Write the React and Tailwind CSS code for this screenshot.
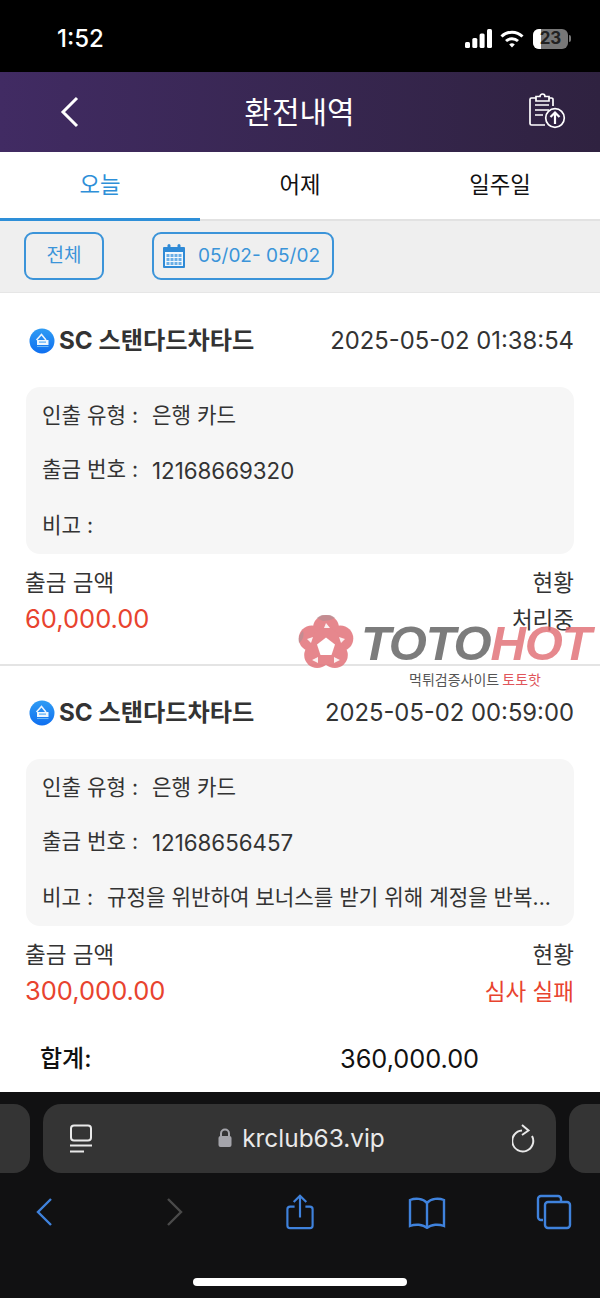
import React from 'react';

function BankIcon() {
  return (
    <svg width="26" height="26" viewBox="0 0 26 26" className="shrink-0">
      <defs>
        <linearGradient id="bank" x1="0" y1="0" x2="0" y2="1">
          <stop offset="0" stopColor="#2f9cf4" />
          <stop offset="1" stopColor="#0f6ff0" />
        </linearGradient>
      </defs>
      <circle cx="13" cy="13" r="12.5" fill="url(#bank)" />
      <path d="M7.5 12 12.5 6.5l4.5 5.5" fill="none" stroke="#eef6fe" strokeWidth="1.5" />
      <path d="M8 12h11.5v5H8z" fill="#eef6fe" />
      <path d="M10 13.5h7v1.2h-7z" fill="#5aaef5" />
      <path d="M8 18.5h11.5" stroke="#6db8f7" strokeWidth="1" />
    </svg>
  );
}

function Record({ time, account, note, amount, status, statusClass }) {
  return (
    <div className="px-[26px]">
      <div className="h-[94px] flex items-center justify-between pl-[3px] pt-[2px]">
        <div className="flex items-center gap-[4px]">
          <BankIcon />
          <span className="text-[24.2px] font-bold text-[#333]">SC 스탠다드차타드</span>
        </div>
        <span className="text-[23.8px] text-[#333]">{time}</span>
      </div>
      <div className="h-[167px] rounded-[14px] bg-[#f6f6f6] px-[16px] pt-[1.5px] flex flex-col text-[21.2px] text-[#333]">
        <div className="h-[54px] flex items-center"><span className="w-[110px]">인출 유형 :</span><span>은행 카드</span></div>
        <div className="h-[56px] flex items-center"><span className="w-[110px]">출금 번호 :</span><span className="text-[22.3px]">{account}</span></div>
        <div className="h-[56px] flex items-center">
          <span className="w-[65px] shrink-0">비고 :</span>
          <span className="whitespace-nowrap">{note}</span>
        </div>
      </div>
      <div className="mt-[11px] flex justify-between text-[22.5px] text-[#333] h-[36px] items-center">
        <span className="-ml-px">출금 금액</span>
        <span>현황</span>
      </div>
      <div className="flex justify-between items-center h-[36px] pt-[1px]">
        <span className="-ml-px text-[25.5px] text-[#e8432e]">{amount}</span>
        <span className={`text-[22.5px] ${statusClass}`}>{status}</span>
      </div>
    </div>
  );
}

export default function App() {
  return (
    <div className="relative w-[600px] h-[1298px] overflow-hidden bg-white font-['Inter','Noto_Sans_CJK_KR',sans-serif]">
      {/* Status bar */}
      <div className="h-[72px] bg-black flex items-center justify-between pl-[57px] pr-[29px] pt-[5px] text-white">
        <span className="text-[24px] font-medium">1:52</span>
        <div className="flex items-center gap-[8px]">
          <svg width="27" height="19" viewBox="0 0 27 19" fill="white">
            <rect x="0" y="13" width="5" height="6" rx="1.5" />
            <rect x="7.3" y="9" width="5" height="10" rx="1.5" />
            <rect x="14.6" y="4.5" width="5" height="14.5" rx="1.5" />
            <rect x="22" y="0" width="5" height="19" rx="1.5" />
          </svg>
          <svg width="24" height="18" viewBox="0 0 24 18" fill="none" stroke="white" strokeWidth="3">
            <path d="M1.5 6.5a15 15 0 0 1 21 0" />
            <path d="M6 11a9 9 0 0 1 12 0" />
            <path d="M12 17.5 9.2 14.6a4 4 0 0 1 5.6 0z" fill="white" stroke="none" />
          </svg>
          <div className="flex items-center gap-[1px] ml-px">
            <div className="relative w-[35px] h-[20px] rounded-[6px] bg-[#777] overflow-hidden flex items-center justify-center">
              <div className="absolute left-0 top-0 bottom-0 w-[8px] bg-white" />
              <span className="relative text-[17px] font-bold text-[#222]">23</span>
            </div>
            <div className="w-[2px] h-[7px] rounded-r-full bg-[#777]" />
          </div>
        </div>
      </div>

      {/* Header */}
      <div className="h-[80px] bg-gradient-to-r from-[#412b63] to-[#2f2240] flex items-center justify-between pl-[60px] pr-[34px] text-white">
        <svg width="19" height="32" viewBox="0 0 19 32" fill="none" stroke="white" strokeWidth="3">
          <path d="M17 2 3 16l14 14" />
        </svg>
        <span className="text-[30px] mr-[8px]">환전내역</span>
        <svg width="38" height="38" viewBox="0 0 38 38" fill="none" stroke="white" strokeWidth="1.7">
          <path d="M8 5H3.5A1.5 1.5 0 0 0 2 6.5v24A1.5 1.5 0 0 0 3.5 32H17" />
          <path d="M21 5h2.5A1.5 1.5 0 0 1 25 6.5V13" />
          <path d="M8 8V3.5h4a2.5 2.5 0 0 1 5 0h4V8z" />
          <path d="M7 12h14M7 17h14M7 22h8" />
          <circle cx="27" cy="25" r="9.3" />
          <path d="M27 31V19.5M22.5 24 27 19.5l4.5 4.5" strokeWidth="2.2" />
        </svg>
      </div>

      {/* Tabs */}
      <div className="h-[68px] mt-[1px] flex border-b-[2px] border-[#e2e2e2] text-[22.3px]">
        <div className="relative w-[200px] flex items-center justify-center text-[#2e8fd8] pb-[2px]">
          오늘
          <div className="absolute left-0 right-0 -bottom-[2px] h-[3px] bg-[#2e8fd8]" />
        </div>
        <div className="w-[200px] flex items-center justify-center text-[#111] pb-[2px]">어제</div>
        <div className="w-[200px] flex items-center justify-center text-[#111] pb-[2px]">일주일</div>
      </div>

      {/* Filter bar */}
      <div className="h-[72px] bg-[#efefef] flex items-start pt-[11px] pl-[24px] gap-[48px] border-b border-[#e6e6e6]">
        <div className="w-[80px] h-[48px] border-2 border-[#3b94d9] rounded-[9px] flex items-center justify-center text-[19px] text-[#3b94d9] pt-[1px]">전체</div>
        <div className="w-[182px] h-[48px] border-2 border-[#3b94d9] rounded-[9px] flex items-center pl-[9px] gap-[13px] text-[#3b94d9]">
          <svg width="22" height="24" viewBox="0 0 22 24" fill="#2f8ad6">
            <path d="M1 3h20a1 1 0 0 1 1 1v19a1 1 0 0 1-1 1H1a1 1 0 0 1-1-1V4a1 1 0 0 1 1-1z" />
            <rect x="4.5" y="0" width="3" height="5" rx="1.5" />
            <rect x="14.5" y="0" width="3" height="5" rx="1.5" />
            <path d="M2 8h18v14H2z" fill="#f1f7fc" />
            <path d="M3.5 10h3v3h-3zM7.5 10h3v3h-3zM11.5 10h3v3h-3zM15.5 10h3v3h-3zM3.5 14h3v3h-3zM7.5 14h3v3h-3zM11.5 14h3v3h-3zM15.5 14h3v3h-3zM3.5 18h3v3h-3zM7.5 18h3v3h-3zM11.5 18h3v3h-3zM15.5 18h3v3h-3z" fill="#6aaee6" />
          </svg>
          <span className="text-[19px] whitespace-nowrap">05/02- 05/02</span>
        </div>
      </div>

      <Record
        time="2025-05-02 01:38:54"
        account="12168669320"
        note=""
        amount="60,000.00"
        status="처리중"
        statusClass="text-[#333]"
      />
      <div className="h-[2px] mt-[27px] bg-[#e4e4e4]" />
      <div className="-mt-px">
        <Record
          time="2025-05-02 00:59:00"
          account="12168656457"
          note="규정을 위반하여 보너스를 받기 위해 계정을 반복..."
          amount="300,000.00"
          status="심사 실패"
          statusClass="text-[#e8432e]"
        />
      </div>

      {/* Total */}
      <div className="h-[82px] mt-[9px] flex items-center pl-[40px] text-[25.3px] text-[#111]">
        <span className="w-[300px] text-[24px] font-medium">합계:</span>
        <span>360,000.00</span>
      </div>

      {/* Safari toolbar */}
      <div className="absolute left-0 right-0 bottom-0 h-[206px] bg-[#111112] pt-[12px]">
        <div className="flex gap-[13px] -ml-[7px] w-[640px]">
          <div className="w-[37px] h-[69px] rounded-r-[16px] bg-[#343434]" />
          <div className="w-[513px] h-[69px] rounded-[18px] bg-[#343434] flex items-center justify-between pl-[26px] pr-[20px] text-[#e9e9e9]">
            <svg width="24" height="30" viewBox="0 0 24 30" fill="none" stroke="#e9e9e9" strokeWidth="2">
              <rect x="2" y="1.5" width="20" height="15" rx="3" />
              <path d="M1 21.5h22M1 27.5h14" />
            </svg>
            <div className="flex items-center gap-[10px] pr-[2px]">
              <svg width="14" height="20" viewBox="0 0 14 20" fill="#a5a5ab">
                <path d="M3 8V5.5a4 4 0 0 1 8 0V8" fill="none" stroke="#a5a5ab" strokeWidth="2" />
                <rect x="0.5" y="8" width="13" height="11" rx="2" />
              </svg>
              <span className="text-[24.4px]">krclub63.vip</span>
            </div>
            <svg width="24" height="30" viewBox="0 0 24 30" fill="none" stroke="#e9e9e9" strokeWidth="2">
              <path d="M10 6.5A10.5 10.5 0 1 0 20 12" />
              <path d="M10 1l6.5 5.5L10 11" />
            </svg>
          </div>
          <div className="w-[60px] h-[69px] rounded-l-[16px] bg-[#343434]" />
        </div>
        <div className="relative h-[60px] mt-[12px]">
          <svg className="absolute left-[34px] top-[11px]" width="20" height="32" viewBox="0 0 20 32" fill="none" stroke="#3f82dc" strokeWidth="2.4">
            <path d="M17 3 4 16l13 13" />
          </svg>
          <svg className="absolute left-[165px] top-[11px]" width="20" height="32" viewBox="0 0 20 32" fill="none" stroke="#4a4a4a" strokeWidth="2.4">
            <path d="M3 3l13 13L3 29" />
          </svg>
          <svg className="absolute left-[284px] top-[9px]" width="32" height="36" viewBox="0 0 32 40" fill="none" stroke="#3f82dc" strokeWidth="2.4">
            <path d="M10 14H5a3 3 0 0 0-3 3v18a3 3 0 0 0 3 3h22a3 3 0 0 0 3-3V17a3 3 0 0 0-3-3h-5" />
            <path d="M16 26V3M9 9l7-7 7 7" />
          </svg>
          <svg className="absolute left-[408px] top-[12px]" width="38" height="32" viewBox="0 0 38 32" fill="none" stroke="#3f82dc" strokeWidth="2.4">
            <path d="M19 6C15 1 7 1 2 3v26c5-2 13-2 17 2 4-4 12-4 17-2V3c-5-2-13-2-17 3z" />
            <path d="M19 6v25" />
          </svg>
          <svg className="absolute left-[536px] top-[9px]" width="36" height="36" viewBox="0 0 36 36" fill="none" stroke="#3f82dc" strokeWidth="2.4">
            <path d="M7 26H5a3 3 0 0 1-3-3V5a3 3 0 0 1 3-3h17a3 3 0 0 1 3 3v2" />
            <rect x="9" y="8" width="25" height="26" rx="3" />
          </svg>
        </div>
        <div className="absolute left-[193px] bottom-[12px] w-[214px] h-[8px] rounded-full bg-white" />
      </div>

      {/* Watermark */}
      <div className="absolute left-[297px] top-[615px] w-[303px] pointer-events-none">
        <div className="flex items-center">
          <svg width="58" height="56" viewBox="0 0 58 56" className="shrink-0 opacity-85">
            <g fill="#e2737a">
              <circle cx="29" cy="13" r="13" />
              <circle cx="43.3" cy="23.4" r="13" />
              <circle cx="37.8" cy="40.1" r="13" />
              <circle cx="20.2" cy="40.1" r="13" />
              <circle cx="14.7" cy="23.4" r="13" />
              <circle cx="29" cy="28" r="15" />
            </g>
            <path d="M20 3a13 13 0 0 1 18 0c-4 2-8 3-12 3zM2 28a13 13 0 0 1 4-12c1 4 1 8-4 12z" fill="#a97b80" opacity="0.7" />
            <path d="M29 22.5 38 29.5 34.500 40H23.500L20 29.500z" fill="#fff" />
            <path d="M29 8l4 5h-6zM10 24l6-2-2 6zM48 24l-6-2 2 6zM15 45l6-3v6zM43 45l-6-3v6z" fill="#fbeeee" />
          </svg>
          <span className="ml-[6px] text-[49px] leading-none font-bold italic tracking-[-1.2px] whitespace-nowrap font-['Liberation_Sans',sans-serif]">
            <span className="text-[#6e6e6e]/90">TOTO</span><span className="text-[#e06a70]/80">HOT</span>
          </span>
        </div>
        <div className="text-[14px] text-[#555] pl-[112px] -mt-[2px] font-['Noto_Sans_CJK_KR',sans-serif]">
          먹튀검증사이트 <span className="text-[#e0555a]">토토핫</span>
        </div>
      </div>
    </div>
  );
}
